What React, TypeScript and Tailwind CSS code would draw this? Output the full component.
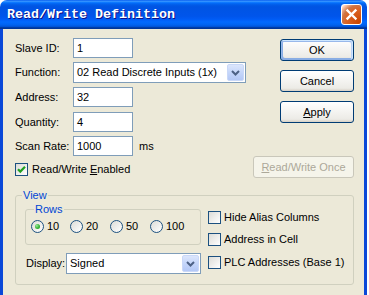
import React from "react";

function Chevron() {
  return (
    <svg width="9" height="6" viewBox="0 0 9 6">
      <path d="M1 1 L4.5 4.5 L8 1" fill="none" stroke="#4D6185" strokeWidth="2" />
    </svg>
  );
}

function TextBox({ value }: { value: string }) {
  return (
    <div className="h-[20px] w-[60px] border border-[#7F9DB9] bg-white pl-[3px] leading-[18px]">
      {value}
    </div>
  );
}

function Combo({ value, w }: { value: string; w: string }) {
  return (
    <div className={"flex h-[21px] border border-[#7F9DB9] bg-white p-[1px] " + w}>
      <span className="flex-1 pl-[2px] leading-[17px]">{value}</span>
      <span className="flex w-[17px] items-center justify-center rounded-[2px] border border-[#C9D8F8] bg-[linear-gradient(180deg,#DCE6FC_0%,#C5D6FA_50%,#B4C8F6_100%)]">
        <Chevron />
      </span>
    </div>
  );
}

function CheckBox({ checked }: { checked?: boolean }) {
  return (
    <div className="flex h-[13px] w-[13px] shrink-0 items-center justify-center border border-[#1C5180] bg-[linear-gradient(135deg,#DCDCD7_0%,#FFFFFF_100%)]">
      {checked && (
        <svg width="11" height="11" viewBox="0 0 11 11">
          <path d="M2 5.2 L4.3 7.6 L9 2.8" fill="none" stroke="#21A121" strokeWidth="2.2" />
        </svg>
      )}
    </div>
  );
}

function Radio({ checked }: { checked?: boolean }) {
  return (
    <div className="flex h-[13px] w-[13px] shrink-0 items-center justify-center rounded-full border border-[#1C5180] bg-[linear-gradient(135deg,#DCDCD7_0%,#FFFFFF_100%)]">
      {checked && (
        <div className="h-[5px] w-[5px] rounded-full bg-[radial-gradient(circle_at_35%_35%,#9CEB9C_0%,#3DB83D_50%,#1C8F1C_100%)]" />
      )}
    </div>
  );
}

function Field({ label, children, extra }: { label: string; children: React.ReactNode; extra?: React.ReactNode }) {
  return (
    <div className="flex items-center">
      <span className="w-[58px]">{label}</span>
      {children}
      {extra}
    </div>
  );
}

export default function App() {
  return (
    <div className="h-[295px] w-[369px] overflow-hidden bg-white font-[family-name:'Liberation_Sans',Arial,sans-serif] text-[11px] leading-[13px] text-black">
      <div className="flex w-[367px] flex-col">
        {/* Title bar */}
        <div className="flex h-[29px] items-center justify-between rounded-t-[7px] bg-[linear-gradient(180deg,#0058ee_0%,#3a93ff_4%,#288eff_6%,#127dff_8%,#036ffc_10%,#0262ee_14%,#0057e5_20%,#0054e3_24%,#0055eb_56%,#005bf5_66%,#026afe_76%,#0062ef_86%,#0052d6_92%,#0040ab_94%,#003092_100%)] pl-[7px] pr-[5px]">
          <span className="font-[family-name:'Liberation_Mono',monospace] text-[13.33px] font-bold leading-none text-white [text-shadow:1px_1px_#0f1089]">
            Read/Write Definition
          </span>
          <div className="flex h-[21px] w-[21px] items-center justify-center rounded-[3px] border border-white bg-[radial-gradient(circle_at_90%_90%,#cc4600_0%,#dc6527_55%,#cd7546_70%,#ffccb2_90%,#ffffff_100%)]">
            <svg width="13" height="13" viewBox="0 0 13 13">
              <path d="M2.5 2.5 L10.5 10.5 M10.5 2.5 L2.5 10.5" stroke="#ffffff" strokeWidth="2.4" strokeLinecap="square" />
            </svg>
          </div>
        </div>

        {/* Body */}
        <div className="flex flex-col border-x-[3px] border-b-[3px] border-[#0A48D8] bg-[#ECE9D8] pb-[10px] pl-[12px] pr-[10px]">
          <div className="flex justify-between">
            {/* left form */}
            <div className="flex flex-col">
              <div className="mt-[9px]">
                <Field label="Slave ID:">
                  <TextBox value="1" />
                </Field>
              </div>
              <div className="mt-[4px]">
                <Field label="Function:">
                  <Combo value="02 Read Discrete Inputs (1x)" w="w-[173px]" />
                </Field>
              </div>
              <div className="mt-[4px]">
                <Field label="Address:">
                  <TextBox value="32" />
                </Field>
              </div>
              <div className="mt-[5px]">
                <Field label="Quantity:">
                  <TextBox value="4" />
                </Field>
              </div>
              <div className="mt-[4px]">
                <Field label="Scan Rate:" extra={<span className="ml-[6px]">ms</span>}>
                  <TextBox value="1000" />
                </Field>
              </div>
              <div className="mt-[7px] flex items-center gap-[4px]">
                <CheckBox checked />
                <span>
                  Read/Write <u>E</u>nabled
                </span>
              </div>
            </div>

            {/* right buttons */}
            <div className="flex flex-col items-end">
              <div className="mt-[10px] flex h-[22px] w-[74px] items-center justify-center rounded-[3px] border border-[#003C74] bg-[linear-gradient(180deg,#ffffff_0%,#ecebe6_86%,#d6d0c5_100%)] shadow-[inset_-1px_1px_#cee7ff,inset_1px_2px_#98b8ea,inset_-2px_2px_#bcd4f6,inset_1px_-1px_#89ade4,inset_2px_-2px_#89ade4]">
                OK
              </div>
              <div className="mt-[9px] flex h-[22px] w-[74px] items-center justify-center rounded-[3px] border border-[#003C74] bg-[linear-gradient(180deg,#ffffff_0%,#ecebe6_86%,#d6d0c5_100%)]">
                Cancel
              </div>
              <div className="mt-[9px] flex h-[22px] w-[74px] items-center justify-center rounded-[3px] border border-[#003C74] bg-[linear-gradient(180deg,#ffffff_0%,#ecebe6_86%,#d6d0c5_100%)]">
                <span>
                  <u>A</u>pply
                </span>
              </div>
              <div className="mt-[33px] flex h-[22px] w-[101px] items-center justify-center rounded-[3px] border border-[#C9C7BA] bg-[#F5F4EA] text-[#ACA899]">
                <span>
                  <u>R</u>ead/Write Once
                </span>
              </div>
            </div>
          </div>

          {/* View group */}
          <fieldset className="mt-[11px] rounded-[3px] border border-[#D0D0BF] p-0">
            <legend className="ml-[6px] px-[1px] leading-[13px] text-[#0046D5]">View</legend>
            <div className="flex pb-[10px] pl-[9px]">
              <div className="flex w-[176px] flex-col pt-[1px]">
                <fieldset className="rounded-[3px] border border-[#D0D0BF] p-0">
                  <legend className="ml-[8px] px-[1px] leading-[13px] text-[#0046D5]">Rows</legend>
                  <div className="flex pb-[11px] pl-[5px] pt-[4px]">
                    <div className="flex w-[39px] items-center gap-[3px]">
                      <Radio checked />
                      <span>10</span>
                    </div>
                    <div className="flex w-[40px] items-center gap-[3px]">
                      <Radio />
                      <span>20</span>
                    </div>
                    <div className="flex w-[40px] items-center gap-[3px]">
                      <Radio />
                      <span>50</span>
                    </div>
                    <div className="flex w-[40px] items-center gap-[3px]">
                      <Radio />
                      <span>100</span>
                    </div>
                  </div>
                </fieldset>
                <div className="mt-[8px] flex items-center">
                  <span className="w-[41px] pl-[1px]">Display:</span>
                  <Combo value="Signed" w="w-[135px]" />
                </div>
              </div>
              <div className="ml-[7px] flex flex-col pt-[9px]">
                <div className="flex items-center gap-[3px]">
                  <CheckBox />
                  <span>Hide Alias Columns</span>
                </div>
                <div className="mt-[9px] flex items-center gap-[3px]">
                  <CheckBox />
                  <span>Address in Cell</span>
                </div>
                <div className="mt-[10px] flex items-center gap-[3px]">
                  <CheckBox />
                  <span>PLC Addresses (Base 1)</span>
                </div>
              </div>
            </div>
          </fieldset>
        </div>
      </div>
    </div>
  );
}
